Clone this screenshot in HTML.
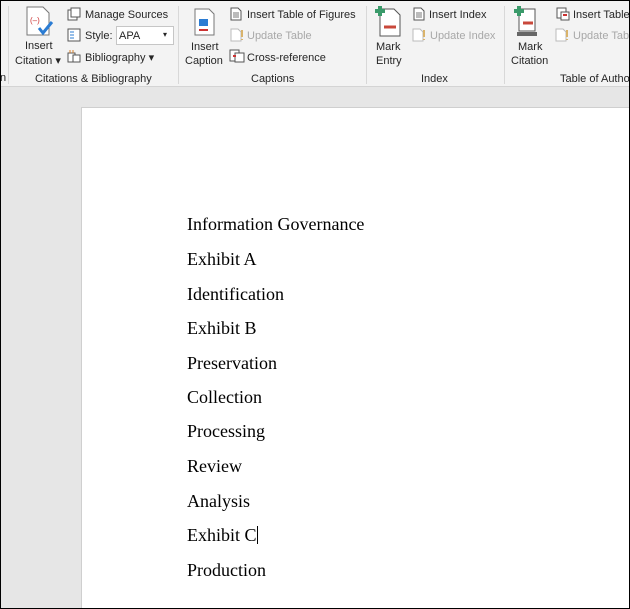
<!DOCTYPE html>
<html><head><style>
*{margin:0;padding:0;box-sizing:border-box}
body{width:630px;height:609px;overflow:hidden;background:#e6e6e6;position:relative;font-family:"Liberation Sans",sans-serif;}
#frame{position:absolute;inset:0;border:1px solid #000;z-index:10;pointer-events:none}
#ribbon{position:absolute;left:0;top:0;width:630px;height:87px;background:#f3f3f3;border-bottom:1px solid #d4d4d4}
.t{position:absolute;font-size:11px;color:#262626;white-space:nowrap;line-height:13px}
.g{color:#a8a8a8}
.sep{position:absolute;top:6px;width:1px;height:78px;background:#d8d8d8}
.lbl{position:absolute;top:73px;font-size:11px;color:#262626;white-space:nowrap}
#page{position:absolute;left:81px;top:107px;width:548px;height:502px;background:#fff;border-left:1px solid #cfcfcf;border-top:1px solid #cfcfcf}
.p{position:absolute;left:187px;font-family:"Liberation Serif",serif;font-size:18px;color:#000;white-space:nowrap;line-height:20px}
.ic{position:absolute}
</style></head><body>
<div id="ribbon">
<div class="t" style="left:0;top:72px">n</div>
<div class="sep" style="left:8px"></div>
<svg class="ic" style="left:25px;top:6px" width="30" height="32"><path d="M2 1h16l6 6v22H2z" fill="#fff" stroke="#777"/><text x="5" y="17" font-size="8" fill="#c33" font-family="Liberation Sans">(–)</text><path d="M14 22l4 5 9-11" stroke="#2b7cd3" stroke-width="3" fill="none"/></svg>
<div class="t" style="left:25px;top:40px">Insert</div>
<div class="t" style="left:15px;top:55px">Citation ▾</div>
<svg class="ic" style="left:67px;top:7px" width="14" height="14"><rect x="1" y="3" width="9" height="10" fill="#fff" stroke="#555"/><rect x="4" y="1" width="9" height="9" fill="#fff" stroke="#555"/></svg>
<div class="t" style="left:85px;top:9px">Manage Sources</div>
<svg class="ic" style="left:67px;top:28px" width="14" height="14"><rect x="1" y="1" width="12" height="12" fill="#fff" stroke="#555"/><path d="M3 4h4M3 7h4M3 10h4" stroke="#2b7cd3"/></svg>
<div class="t" style="left:85px;top:30px">Style:</div>
<div style="position:absolute;left:116px;top:26px;width:58px;height:19px;background:#fff;border:1px solid #c6c6c6"></div>
<div class="t" style="left:119px;top:30px">APA</div>
<div class="t" style="left:163px;top:28px;font-size:8px">▾</div>
<svg class="ic" style="left:67px;top:49px" width="14" height="14"><rect x="1" y="4" width="7" height="9" fill="#fff" stroke="#555"/><rect x="6" y="6" width="7" height="7" fill="#fff" stroke="#555"/><path d="M3 1v3M6 1v3" stroke="#d9822b"/></svg>
<div class="t" style="left:85px;top:52px">Bibliography ▾</div>
<div class="lbl" style="left:35px">Citations &amp; Bibliography</div>
<div class="sep" style="left:178px"></div>
<svg class="ic" style="left:194px;top:8px" width="22" height="28"><path d="M1 1h14l5 5v21H1z" fill="#fff" stroke="#777"/><rect x="5" y="11" width="9" height="7" fill="#2b7cd3"/><path d="M5 22h9" stroke="#c33" stroke-width="2"/></svg>
<div class="t" style="left:191px;top:41px">Insert</div>
<div class="t" style="left:185px;top:55px">Caption</div>
<svg class="ic" style="left:230px;top:7px" width="12" height="14"><path d="M1 1h7l3 3v9H1z" fill="#fff" stroke="#555"/><path d="M3 6h6M3 8h6M3 10h6" stroke="#777"/></svg>
<div class="t" style="left:247px;top:9px">Insert Table of Figures</div>
<svg class="ic" style="left:230px;top:28px" width="14" height="14"><path d="M1 1h7l3 3v9H1z" fill="#fff" stroke="#bbb"/><path d="M12 2v7M12 11v1" stroke="#d9b36b" stroke-width="2"/></svg>
<div class="t g" style="left:247px;top:30px">Update Table</div>
<svg class="ic" style="left:229px;top:49px" width="16" height="14"><rect x="1" y="1" width="9" height="11" fill="#fff" stroke="#555"/><rect x="6" y="4" width="9" height="9" fill="#fff" stroke="#555"/><path d="M4 7h3" stroke="#c33" stroke-width="2"/></svg>
<div class="t" style="left:247px;top:52px">Cross-reference</div>
<div class="lbl" style="left:251px">Captions</div>
<div class="sep" style="left:366px"></div>
<svg class="ic" style="left:374px;top:5px" width="28" height="32"><path d="M6 4h14l6 6v21H6z" fill="#fff" stroke="#555"/><path d="M1 6h10M6 1v10" stroke="#3a9a6a" stroke-width="4"/><path d="M10 22h12" stroke="#c9483b" stroke-width="3"/></svg>
<div class="t" style="left:376px;top:41px">Mark</div>
<div class="t" style="left:376px;top:55px">Entry</div>
<svg class="ic" style="left:413px;top:7px" width="12" height="14"><path d="M1 1h7l3 3v9H1z" fill="#fff" stroke="#555"/><path d="M3 6h6M3 8h6M3 10h6" stroke="#777"/></svg>
<div class="t" style="left:429px;top:9px">Insert Index</div>
<svg class="ic" style="left:412px;top:28px" width="14" height="14"><path d="M1 1h7l3 3v9H1z" fill="#fff" stroke="#bbb"/><path d="M12 2v7M12 11v1" stroke="#d9b36b" stroke-width="2"/></svg>
<div class="t g" style="left:430px;top:30px">Update Index</div>
<div class="lbl" style="left:421px">Index</div>
<div class="sep" style="left:504px"></div>
<svg class="ic" style="left:513px;top:5px" width="30" height="32"><path d="M6 4h16v22H6z" fill="#fff" stroke="#555"/><path d="M1 6h10M6 1v10" stroke="#3a9a6a" stroke-width="4"/><path d="M10 18h10" stroke="#c9483b" stroke-width="3"/><path d="M4 27h20v4H4z" fill="#666"/></svg>
<div class="t" style="left:518px;top:41px">Mark</div>
<div class="t" style="left:511px;top:55px">Citation</div>
<svg class="ic" style="left:556px;top:7px" width="14" height="14"><rect x="1" y="1" width="9" height="10" fill="#fff" stroke="#555"/><rect x="5" y="5" width="8" height="8" fill="#fff" stroke="#555"/><path d="M7 8h4" stroke="#c33" stroke-width="2"/></svg>
<div class="t" style="left:573px;top:9px">Insert Table</div>
<svg class="ic" style="left:555px;top:28px" width="14" height="14"><path d="M1 1h7l3 3v9H1z" fill="#fff" stroke="#bbb"/><path d="M12 2v7M12 11v1" stroke="#d9b36b" stroke-width="2"/></svg>
<div class="t g" style="left:573px;top:30px">Update Tab</div>
<div class="lbl" style="left:560px">Table of Autho</div>
</div>
<div id="page"></div>
<div class="p" style="top:214px">Information Governance</div>
<div class="p" style="top:249px">Exhibit A</div>
<div class="p" style="top:284px">Identification</div>
<div class="p" style="top:318px">Exhibit B</div>
<div class="p" style="top:353px">Preservation</div>
<div class="p" style="top:387px">Collection</div>
<div class="p" style="top:421px">Processing</div>
<div class="p" style="top:456px">Review</div>
<div class="p" style="top:491px">Analysis</div>
<div class="p" style="top:525px">Exhibit C<span style="display:inline-block;width:1px;height:18px;background:#000;vertical-align:-3px"></span></div>
<div class="p" style="top:560px">Production</div>
<div id="frame"></div>
</body></html>
